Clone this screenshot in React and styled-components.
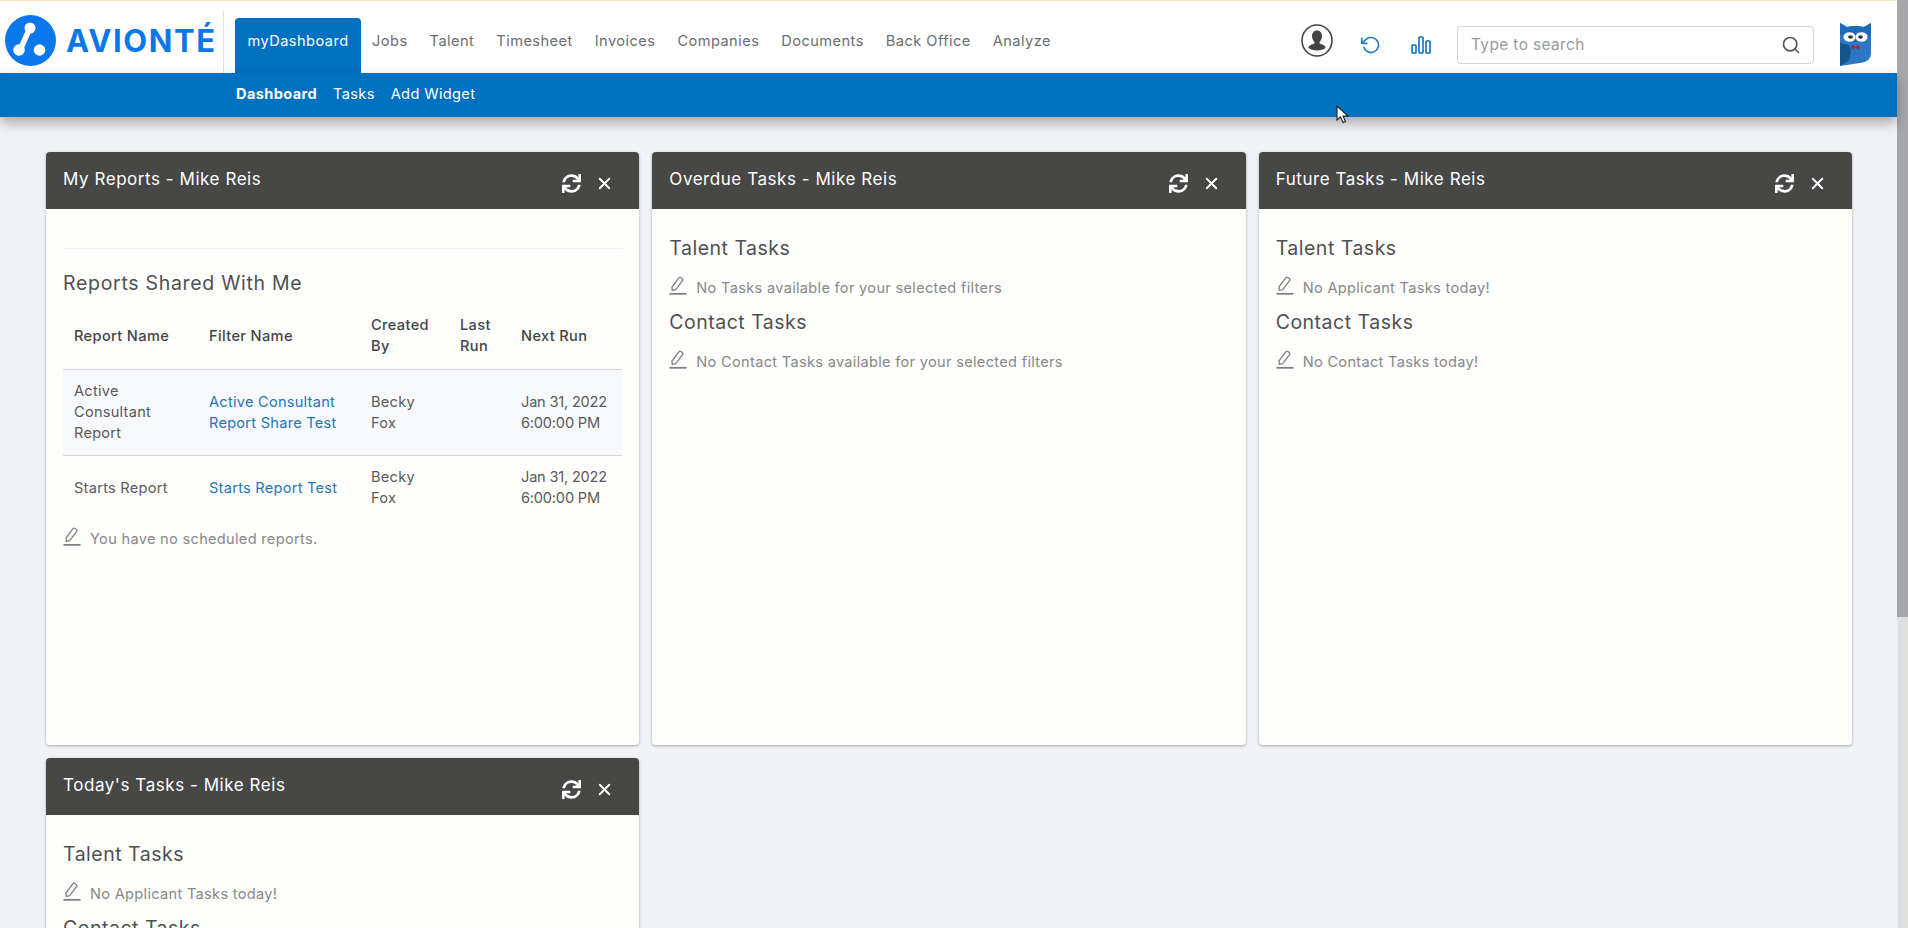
import React from 'react';
import styled, { createGlobalStyle } from 'styled-components';
import { FiX, FiSearch, FiRotateCcw } from 'react-icons/fi';
import { FaSync } from 'react-icons/fa';

const FONT = `'Inter', 'Noto Sans', 'Liberation Sans', sans-serif`;

const GlobalStyle = createGlobalStyle`
  html, body { margin: 0; padding: 0; height: 100%; overflow: hidden; }
  body { font-family: ${FONT}; background: #f1f2f5; color: #4a4a4a; }
  #root { height: 100%; }
  * { box-sizing: border-box; }
`;

const Shell = styled.div`
  display: flex;
  height: 928px;
  overflow: hidden;
  position: relative;
`;

const Main = styled.div`
  flex: 1;
  min-width: 0;
  display: flex;
  flex-direction: column;
`;

const ScrollTrack = styled.div`
  width: 11px;
  flex: none;
  background: #dfdfdd;
  border-left: 1px solid #ececea;
`;

const ScrollThumb = styled.div`
  height: 617px;
  margin-left: -1px;
  background: #a8a8aa;
`;

const TopBar = styled.header`
  height: 73px;
  flex: none;
  background: #fff;
  border-top: 1px solid #f7e6c4;
  display: flex;
  align-items: flex-end;
  padding-left: 5px;
`;

const LogoWrap = styled.div`
  display: flex;
  align-items: center;
  gap: 10px;
  height: 62px;
  width: 219px;
  padding-bottom: 3px;
  border-right: 1px solid #dfe1e4;
  margin-right: 11px;
`;

const LogoText = styled.span`
  font-size: 31px;
  font-weight: 700;
  color: #0a78ea;
  letter-spacing: 1.6px;
`;

const Nav = styled.nav`
  display: flex;
  align-items: flex-end;
  height: 55px;
`;

const NavItem = styled.a`
  height: 55px;
  display: flex;
  align-items: center;
  padding: 0 ${(p) => (p.$active ? 12.5 : 11)}px 10px;
  font-size: 14.6px;
  letter-spacing: 0.45px;
  color: ${(p) => (p.$active ? '#fff' : '#6d6d6d')};
  background: ${(p) => (p.$active ? '#0070c0' : 'transparent')};
  border-radius: 4px 4px 0 0;
`;

const RightTools = styled.div`
  margin-left: auto;
  height: 100%;
  display: flex;
  align-items: center;
  padding-right: 26px;
  padding-top: 15px;
`;

const ProfileSlot = styled.span`
  display: flex;
  margin-bottom: 8px;
`;

const ToolIcon = styled.span`
  display: flex;
  margin-left: ${(p) => p.$gap}px;
  color: #1f7ec4;
`;

const SearchBox = styled.div`
  width: 357px;
  height: 38px;
  margin-left: 26px;
  margin-right: 26px;
  border: 1px solid #d4d4d4;
  border-radius: 4px;
  display: flex;
  align-items: center;
  justify-content: space-between;
  padding: 0 12px 0 13px;
  font-size: 15.4px;
  letter-spacing: 0.4px;
  color: #9a9a9a;
  background: #fff;
`;

const SubBar = styled.div`
  height: 44px;
  flex: none;
  background: #0070c0;
  display: flex;
  align-items: center;
  gap: 16px;
  padding-left: 236px;
  padding-bottom: 2px;
  font-size: 14.6px;
  letter-spacing: 0.35px;
  color: #fff;
  box-shadow: 0 6px 12px rgba(0, 0, 0, 0.3);
  position: relative;
`;

const SubLink = styled.a`
  font-weight: ${(p) => (p.$active ? 700 : 400)};
`;

const Board = styled.main`
  display: grid;
  grid-template-columns: repeat(3, 1fr);
  grid-auto-rows: 593px;
  gap: 13px;
  padding: 35px 45px 0 46px;
`;

const Card = styled.section`
  background: #fefefd;
  border-radius: 4px;
  box-shadow: 0 1px 3px rgba(0, 0, 0, 0.3);
  overflow: hidden;
`;

const CardHeader = styled.div`
  height: 57px;
  background: #474746;
  display: flex;
  align-items: flex-start;
  justify-content: space-between;
  padding: 15px 25px 0 17px;
  color: #fff;
`;

const CardTitle = styled.h2`
  margin: 0;
  font-size: 17px;
  font-weight: 400;
  letter-spacing: 0.55px;
  line-height: 24px;
`;

const CardTools = styled.div`
  display: flex;
  align-items: center;
  gap: 14px;
  padding-top: 7px;
`;

const CardBody = styled.div`
  padding: ${(p) => (p.$reports ? '39px' : '27px')} 17px 0;
`;

const SectionTitle = styled.h3`
  margin: 0 0 16px;
  font-size: 19.5px;
  font-weight: 400;
  letter-spacing: 0.5px;
  line-height: 24px;
  color: #505050;
`;

const ReportsTitle = styled(SectionTitle)`
  border-top: 1px solid #f2f2f2;
  padding-top: 22px;
  margin-bottom: 20px;
  letter-spacing: 0.7px;
`;

const Empty = styled.p`
  margin: 0 0 12px;
  display: flex;
  align-items: flex-end;
  gap: 9px;
  font-size: 14.6px;
  letter-spacing: 0.3px;
  line-height: 20px;
  color: #888;
`;

const ReportTable = styled.table`
  width: 100%;
  border-collapse: collapse;
  table-layout: fixed;
  font-size: 14.6px;
  line-height: 21px;
  margin-bottom: 7px;
`;

const Th = styled.th`
  text-align: left;
  font-weight: 500;
  letter-spacing: 0.35px;
  color: #444;
  padding: 0 11px 12px;
  width: ${(p) => p.$w}px;
  &:last-child { padding-right: 0; }
`;

const Td = styled.td`
  padding: 11px;
  letter-spacing: 0.25px;
  color: #5a5a5a;
  &:last-child { padding-right: 0; letter-spacing: -0.2px; }
`;

const Row = styled.tr`
  border-top: 1px solid #d8d8d8;
  background: ${(p) => (p.$striped ? '#f8f9fc' : 'transparent')};
`;

const FilterLink = styled.a`
  color: #1f76b8;
`;

const Cursor = styled.svg`
  position: absolute;
  left: 1336px;
  top: 105px;
`;

const PenIcon = styled.svg`
  flex: none;
  margin-bottom: 3px;
`;

const Pen = () => (
  <PenIcon width="18" height="19" viewBox="0 0 18 19" fill="none" stroke="#808080" strokeWidth="1.3">
    <path d="M3 11 L9.8 1.8 a1.5 1.5 0 0 1 2.1 -0.3 l1.3 1 a1.5 1.5 0 0 1 0.3 2.1 L6.7 13.6 L3.2 14.4 Z" strokeLinejoin="round" />
    <path d="M0.5 17.8 H17.5" strokeWidth="1.8" />
  </PenIcon>
);

const Logo = () => (
  <svg width="51" height="51" viewBox="0 0 51 51">
    <circle cx="25.5" cy="25.5" r="25.5" fill="#0a78ea" />
    <path d="M25 13 L15 35" stroke="#fff" strokeWidth="5.5" />
    <circle cx="25" cy="13" r="5.5" fill="#fff" />
    <circle cx="14" cy="35" r="5.8" fill="#fff" />
    <circle cx="34.5" cy="35" r="5.8" fill="#fff" />
  </svg>
);

const Profile = () => (
  <svg width="32" height="33" viewBox="0 0 32 33">
    <ellipse cx="16" cy="16.5" rx="15" ry="15.5" fill="#fff" stroke="#444" strokeWidth="1.6" />
    <path d="M16 6.5c-3.4 0-5 2.6-5 5.6 0 2.4 1 4.6 2.4 5.8v1.6c-2.4 1-5.4 1.6-6 4.2 1.8 1.8 5 2.8 8.6 2.8s6.8-1 8.6-2.8c-.6-2.6-3.6-3.2-6-4.2v-1.6c1.4-1.2 2.4-3.4 2.4-5.8 0-3-1.6-5.6-5-5.6z" fill="#444" />
  </svg>
);

const Bars = () => (
  <svg width="20" height="18" viewBox="0 0 20 18" fill="none" stroke="#0a70c0" strokeWidth="1.6">
    <rect x="1" y="9" width="4" height="8" rx="0.8" />
    <rect x="8" y="1" width="4" height="16" rx="0.8" />
    <rect x="15" y="5" width="4" height="12" rx="0.8" />
  </svg>
);

const Owl = () => (
  <svg width="31" height="43" viewBox="0 0 31 43">
    <path d="M0 0 L7 4 Q15.5 2 24 4 L31 0 V30 Q31 39 20 40 L0 43 Z" fill="#2a78c4" />
    <path d="M0 0 L7 4 Q15.5 2 24 4 L31 0 V12 H0 Z" fill="#1a6cb8" />
    <path d="M0 20 L9 22 Q13 30 8 38 L0 43 Z" fill="#14558f" />
    <ellipse cx="9.5" cy="14" rx="6" ry="4.8" fill="#fff" />
    <ellipse cx="21.5" cy="14" rx="6" ry="4.8" fill="#fff" />
    <ellipse cx="10.5" cy="14" rx="2.4" ry="1.8" fill="#1b3550" />
    <ellipse cx="20.5" cy="14" rx="2.4" ry="1.8" fill="#1b3550" />
    <path d="M15.5 16 l-1.6 3 h3.2 z" fill="#555" />
    <path d="M11.5 22 l4 1.8 4-1.8 v4.5 l-4-1.8 -4 1.8 z" fill="#b0202c" />
  </svg>
);

const Header = ({ title }) => (
  <CardHeader>
    <CardTitle>{title}</CardTitle>
    <CardTools>
      <FaSync size={19} />
      <FiX size={19} strokeWidth={2.4} />
    </CardTools>
  </CardHeader>
);

const navItems = ['Jobs', 'Talent', 'Timesheet', 'Invoices', 'Companies', 'Documents', 'Back Office', 'Analyze'];

const TaskCard = ({ title, talent, contact }) => (
  <Card>
    <Header title={title} />
    <CardBody>
      <SectionTitle>Talent Tasks</SectionTitle>
      <Empty><Pen />{talent}</Empty>
      <SectionTitle>Contact Tasks</SectionTitle>
      <Empty><Pen />{contact}</Empty>
    </CardBody>
  </Card>
);

const App = () => (
  <Shell>
    <GlobalStyle />
    <Main>
      <TopBar>
        <LogoWrap>
          <Logo />
          <LogoText>AVIONTÉ</LogoText>
        </LogoWrap>
        <Nav>
          <NavItem $active>myDashboard</NavItem>
          {navItems.map((item) => <NavItem key={item}>{item}</NavItem>)}
        </Nav>
        <RightTools>
          <ProfileSlot><Profile /></ProfileSlot>
          <ToolIcon $gap={28}><FiRotateCcw size={20} /></ToolIcon>
          <ToolIcon $gap={30}><Bars /></ToolIcon>
          <SearchBox>
            Type to search
            <FiSearch size={20} color="#555" />
          </SearchBox>
          <Owl />
        </RightTools>
      </TopBar>
      <SubBar>
        <SubLink $active>Dashboard</SubLink>
        <SubLink>Tasks</SubLink>
        <SubLink>Add Widget</SubLink>
      </SubBar>
      <Board>
        <Card>
          <Header title="My Reports - Mike Reis" />
          <CardBody $reports>
            <ReportsTitle>Reports Shared With Me</ReportsTitle>
            <ReportTable>
              <thead>
                <tr>
                  <Th $w={135}>Report Name</Th>
                  <Th $w={162}>Filter Name</Th>
                  <Th $w={89}>Created By</Th>
                  <Th $w={61}>Last Run</Th>
                  <Th>Next Run</Th>
                </tr>
              </thead>
              <tbody>
                <Row $striped>
                  <Td>Active Consultant Report</Td>
                  <Td><FilterLink>Active Consultant Report Share Test</FilterLink></Td>
                  <Td>Becky Fox</Td>
                  <Td />
                  <Td>Jan 31, 2022 6:00:00 PM</Td>
                </Row>
                <Row>
                  <Td>Starts Report</Td>
                  <Td><FilterLink>Starts Report Test</FilterLink></Td>
                  <Td>Becky Fox</Td>
                  <Td />
                  <Td>Jan 31, 2022 6:00:00 PM</Td>
                </Row>
              </tbody>
            </ReportTable>
            <Empty><Pen />You have no scheduled reports.</Empty>
          </CardBody>
        </Card>
        <TaskCard title="Overdue Tasks - Mike Reis" talent="No Tasks available for your selected filters" contact="No Contact Tasks available for your selected filters" />
        <TaskCard title="Future Tasks - Mike Reis" talent="No Applicant Tasks today!" contact="No Contact Tasks today!" />
        <TaskCard title="Today's Tasks - Mike Reis" talent="No Applicant Tasks today!" contact="No Contact Tasks today!" />
      </Board>
    </Main>
    <ScrollTrack><ScrollThumb /></ScrollTrack>
    <Cursor width="14" height="19" viewBox="0 0 14 19">
      <path d="M1 1 V15 L4.5 11.8 L7 17.5 L9.5 16.4 L7 11 H12 Z" fill="#fff" stroke="#222" strokeWidth="1.1" />
    </Cursor>
  </Shell>
);

export default App;
